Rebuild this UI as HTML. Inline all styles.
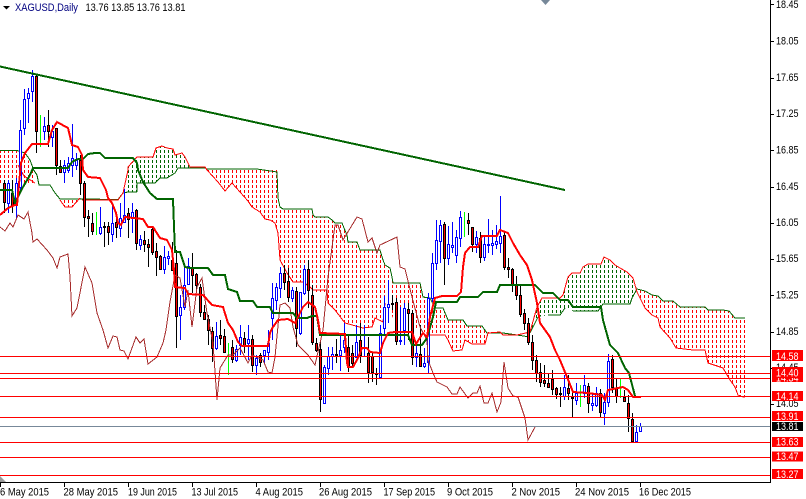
<!DOCTYPE html>
<html><head><meta charset="utf-8"><title>XAGUSD,Daily</title>
<style>html,body{margin:0;padding:0;background:#fff;width:806px;height:499px;overflow:hidden}svg{display:block}
text{font-family:"Liberation Sans",sans-serif;font-size:11px;fill:#000}</style></head><body>
<svg width="806" height="499" viewBox="0 0 806 499" xmlns="http://www.w3.org/2000/svg">
<defs>
<pattern id="r" width="4" height="5" patternUnits="userSpaceOnUse"><rect x="0" y="0" width="1" height="3" fill="#f00"/></pattern>
<pattern id="g" width="4" height="5" patternUnits="userSpaceOnUse"><rect x="0" y="0" width="1" height="3" fill="#006400"/></pattern>
<clipPath id="c"><rect x="0" y="0" width="770" height="482"/></clipPath>
</defs>
<g clip-path="url(#c)">
<!-- cloud -->
<g shape-rendering="crispEdges">
<path fill="url(#r)" d="M0 151H17L25 153L33 170V185H0Z"/>
<path fill="url(#r)" d="M60 200H82L80 198L72 207H65Z"/>
<path fill="url(#g)" d="M128 167L137 157H153L156 148L162 146L167 148L173 149L175 155L182 153L185 157L188 163L190 168L178 168L175 173L167 178H160L155 183H137V192H128Z"/>
<path fill="url(#r)" d="M190 168H205L207 169H277L278 198L280 207L283 209H312L313 215L315 217H328L332 220L335 223H342L344 228L347 235L348 242H357L360 250H380L383 260L385 265L390 268L392 277L393 283H413L420 283L423 297L430 298L435 308H443L448 320H463L467 326H482L487 333H503L517 334L530 337L517 335H503L500 332H488L485 344H472L465 340L462 350H453L448 340L445 335H427L420 327L412 332L405 340L385 303L383 322L375 318L372 327L363 328L345 323L335 310L328 303L327 292H313L310 287L303 282H293L287 273L280 260L278 233L275 223L270 220H265L260 212L252 207L248 201L240 192L232 183L225 191L218 182L207 170Z"/>
<path fill="url(#g)" d="M530 332L537 307L542 298H560L563 295L568 277L572 273H580L583 267L588 264H601L604 257L610 260L615 265L620 268L627 272L633 278L637 289L632 298L630 304H603L598 311H573L565 308L560 315H548L538 317Z"/>
<path fill="url(#r)" d="M637 290L645 291L652 295L658 296L663 301H673L680 307H705L708 310H723L729 311L735 318H745V397H743L738 395L735 387L730 380L723 368L708 363L705 350H676L670 338L660 327L658 318L652 315L645 308Z"/>
</g>
<g fill="none" stroke-width="1" shape-rendering="crispEdges">
<path stroke="#006400" d="M0 150.500H17L25 153L30 160L33 168M33 169L37 175L39 185H50L55 193L60 199H82L118 199.500L123 193L128 192H137M128 167M530 333L538 317M548 315H560L565 308M573 311H598L603 304H630L632 298L637 289L645 291L652 295L658 296L663 301H673L680 307H705L708 310H723L729 311L735 318H745M137 192V183H155L160 178H167L175 173L178 168H190M190 168H205M207 169H257L277 172L278 198L280 207L283 209H312L313 215L315 217H328L332 220L335 223H342L344 228L347 235L348 242H357L360 250H380L383 260L385 265L390 268L392 277L393 283H413L420 283L423 297L430 298L435 308H443L448 320H463L467 326H482L487 333H503L517 335L530 337"/>
<path stroke="#f00" d="M18 165L24 176L35 183M60 200L65 207H72L80 198M82 200H112L118 200L123 193L128 170L128 167L137 157H153L156 148L162 146L167 148L173 149L175 155L182 153L185 157L188 163L190 167H205L207 170L218 182L225 191L232 183L240 192L248 201L252 207L260 212L265 219L270 220L275 223L278 233L280 260L287 273L293 282H303L310 287L313 290H327L328 303L335 310L345 323L363 328L372 327L375 318L383 322L385 303M427 335H445L448 340L453 351L462 350L465 340L472 344H485L488 333L500 332L503 335H517L530 332L537 307L542 298H560L563 295L568 277L572 273H580L583 267L588 264H601L604 257L610 260L615 265L620 268L627 272L633 278L637 292L645 308L652 315L658 318L660 327L670 338L676 348L693 350H705L708 363L723 368L730 380L735 387L738 395L743 397H745"/>
</g>
<!-- candles -->
<g fill="none" stroke="#000" shape-rendering="crispEdges">
<path d="M4.500 180V213M12.500 180V213M36.500 75V153M48.500 110V147M56.500 128V175M60.500 160V173M80.500 155V195M84.500 181V227M88.500 210V237M92.500 213V235M104.500 222V247M108.500 222V245M116.500 212V238M128.500 208V238M136.500 209V250M144.500 231V252M148.500 239V267M152.500 227V255M156.500 243V276M160.500 255V270M172.500 242V270M176.500 250V348M192.500 253V293M196.500 273V292M200.500 284V317M204.500 305V320M208.500 315V345M212.500 327V362M220.500 320V345M224.500 329V352M232.500 340V363M244.500 332V353M252.500 335V372M260.500 353V367M284.500 265V290M288.500 268V302M296.500 287V347M308.500 260V308M312.500 285V345M316.500 338V352M320.500 342V412M336.500 339V363M348.500 335V372M352.500 345V368M360.500 323V363M368.500 337V383M372.500 352V382M376.500 368V385M392.500 295V310M396.500 298V345M408.500 303V340M412.500 310V365M420.500 325V367M444.500 222V285M468.500 213V235M472.500 227V252M480.500 232V263M504.500 232V270M508.500 258V278M512.500 268V292M516.500 276V300M520.500 285V317M524.500 309V330M528.500 318V345M532.500 335V370M536.500 355V382M540.500 363V387M544.500 365V387M548.500 373V388M552.500 370V395M556.500 387V399M560.500 387V407M568.500 375V400M572.500 393V418M588.500 383V413M600.500 389V417M612.500 355V393M616.500 379V403M624.500 390V402M628.500 395V432M632.500 413V442"/>
<path stroke="#00f" d="M8.500 180V213M16.500 178V218M20.500 120V190M24.500 89V135M28.500 88V123M32.500 70V102M44.500 117V140M52.500 125V147M64.500 160V183M68.500 157V173M72.500 124V177M76.500 153V170M100.500 207V235M112.500 203V242M120.500 203V237M124.500 189V220M132.500 203V233M140.500 235V250M164.500 246V274M168.500 251V265M180.500 295V340M184.500 265V310M188.500 258V285M216.500 322V350M236.500 345V362M240.500 325V355M248.500 325V360M256.500 355V375M264.500 350V363M268.500 330V360M272.500 283V340M276.500 283V310M280.500 267V298M292.500 287V302M300.500 292V335M304.500 265V295M324.500 365V403M328.500 347V375M332.500 347V370M340.500 333V371M344.500 323V353M356.500 325V357M364.500 325V357M380.500 325V378M384.500 296V335M388.500 280V323M400.500 307V345M404.500 303V345M416.500 343V367M424.500 348V368M428.500 293V374M432.500 253V302M436.500 220V270M440.500 220V263M448.500 226V265M452.500 222V253M456.500 230V263M460.500 211V247M476.500 231V253M484.500 235V261M488.500 219V253M492.500 230V255M496.500 225V249M500.500 196V253M564.500 375V400M576.500 383V405M584.500 375V398M592.500 393V411M596.500 387V407M604.500 393V425M608.500 354V407M636.500 425V442M640.500 423V432"/>
<path stroke="#0f0" d="M40.500 115V147M96.500 212V235M228.500 343V375M464.500 212V237M580.500 385V407M620.500 379V398"/>
<path fill="#f00" d="M3.500 183.500h2v19h-2zM11.500 193.500h2v12h-2zM35.500 76.500h2v55h-2zM47.500 125.500h2v6h-2zM55.500 128.500h2v37h-2zM59.500 166.500h2v6h-2zM79.500 160.500h2v23h-2zM83.500 183.500h2v34h-2zM87.500 216.500h2v2h-2zM91.500 223.500h2v8h-2zM103.500 226.500h2v1h-2zM107.500 226.500h2v6h-2zM115.500 222.500h2v5h-2zM127.500 213.500h2v6h-2zM135.500 210.500h2v33h-2zM143.500 240.500h2v4h-2zM147.500 244.500h2v3h-2zM151.500 229.500h2v23h-2zM155.500 251.500h2v6h-2zM159.500 256.500h2v13h-2zM171.500 260.500h2v10h-2zM175.500 263.500h2v53h-2zM191.500 268.500h2v7h-2zM195.500 274.500h2v11h-2zM199.500 287.500h2v25h-2zM203.500 312.500h2v7h-2zM207.500 319.500h2v11h-2zM211.500 331.500h2v17h-2zM219.500 335.500h2v3h-2zM223.500 336.500h2v16h-2zM231.500 347.500h2v12h-2zM243.500 338.500h2v7h-2zM251.500 339.500h2v26h-2zM259.500 355.500h2v7h-2zM283.500 273.500h2v9h-2zM287.500 281.500h2v16h-2zM295.500 291.500h2v37h-2zM307.500 269.500h2v21h-2zM311.500 295.500h2v47h-2zM315.500 343.500h2v7h-2zM319.500 349.500h2v50h-2zM335.500 354.500h2v1h-2zM347.500 347.500h2v20h-2zM351.500 353.500h2v10h-2zM359.500 340.500h2v15h-2zM367.500 353.500h2v19h-2zM371.500 356.500h2v16h-2zM375.500 373.500h2v1h-2zM391.500 303.500h2v1h-2zM395.500 302.500h2v39h-2zM407.500 309.500h2v4h-2zM411.500 313.500h2v44h-2zM419.500 354.500h2v12h-2zM443.500 224.500h2v34h-2zM467.500 220.500h2v3h-2zM471.500 227.500h2v17h-2zM479.500 238.500h2v19h-2zM503.500 235.500h2v32h-2zM507.500 267.500h2v2h-2zM511.500 269.500h2v16h-2zM515.500 284.500h2v11h-2zM519.500 295.500h2v19h-2zM523.500 313.500h2v10h-2zM527.500 323.500h2v19h-2zM531.500 342.500h2v18h-2zM535.500 360.500h2v13h-2zM539.500 372.500h2v10h-2zM543.500 380.500h2v3h-2zM547.500 383.500h2v4h-2zM551.500 379.500h2v10h-2zM555.500 388.500h2v6h-2zM559.500 393.500h2v1h-2zM567.500 388.500h2v5h-2zM571.500 397.500h2v1h-2zM587.500 386.500h2v17h-2zM599.500 393.500h2v19h-2zM611.500 359.500h2v28h-2zM615.500 388.500h2v8h-2zM623.500 397.500h2v4h-2zM627.500 403.500h2v15h-2zM631.500 419.500h2v22h-2z"/>
<path fill="#fff" stroke="#00f" d="M7.500 183.500h2v20h-2zM15.500 183.500h2v22h-2zM19.500 130.500h2v57h-2zM23.500 99.500h2v29h-2zM27.500 93.500h2v5h-2zM31.500 76.500h2v15h-2zM43.500 126.500h2v5h-2zM51.500 131.500h2v6h-2zM63.500 165.500h2v7h-2zM67.500 163.500h2v7h-2zM71.500 158.500h2v7h-2zM75.500 160.500h2v5h-2zM99.500 227.500h2v6h-2zM111.500 223.500h2v11h-2zM119.500 218.500h2v10h-2zM123.500 215.500h2v7h-2zM131.500 212.500h2v6h-2zM139.500 239.500h2v6h-2zM163.500 257.500h2v12h-2zM167.500 256.500h2v2h-2zM179.500 307.500h2v8h-2zM183.500 285.500h2v22h-2zM187.500 266.500h2v18h-2zM215.500 336.500h2v12h-2zM235.500 349.500h2v11h-2zM239.500 337.500h2v8h-2zM247.500 339.500h2v4h-2zM255.500 358.500h2v7h-2zM263.500 350.500h2v5h-2zM267.500 343.500h2v9h-2zM271.500 298.500h2v20h-2zM275.500 287.500h2v13h-2zM279.500 273.500h2v15h-2zM291.500 290.500h2v8h-2zM299.500 292.500h2v41h-2zM303.500 269.500h2v24h-2zM323.500 367.500h2v36h-2zM327.500 356.500h2v12h-2zM331.500 354.500h2v2h-2zM339.500 350.500h2v5h-2zM343.500 340.500h2v7h-2zM355.500 342.500h2v15h-2zM379.500 333.500h2v44h-2zM383.500 307.500h2v21h-2zM387.500 304.500h2v3h-2zM399.500 340.500h2v1h-2zM403.500 308.500h2v22h-2zM415.500 353.500h2v4h-2zM423.500 363.500h2v3h-2zM427.500 298.500h2v64h-2zM431.500 263.500h2v35h-2zM435.500 240.500h2v23h-2zM439.500 225.500h2v16h-2zM447.500 244.500h2v14h-2zM451.500 245.500h2v2h-2zM455.500 237.500h2v18h-2zM459.500 217.500h2v21h-2zM475.500 237.500h2v7h-2zM483.500 244.500h2v13h-2zM487.500 244.500h2v1h-2zM491.500 243.500h2v2h-2zM495.500 241.500h2v3h-2zM499.500 236.500h2v7h-2zM563.500 387.500h2v9h-2zM575.500 393.500h2v7h-2zM583.500 385.500h2v8h-2zM591.500 403.500h2v2h-2zM595.500 393.500h2v12h-2zM603.500 402.500h2v11h-2zM607.500 361.500h2v41h-2zM635.500 432.500h2v9h-2zM639.500 426.500h2v5h-2z"/>
</g>
<!-- chikou -->
<path fill="none" stroke="#a52a2a" stroke-width="1" shape-rendering="crispEdges" d="M0 227L5 231L10 223L13 227L18 215L24 219L28 212L32 233L33 242L37 239L47 250L53 258L57 268L60 257L68 254L70 277L72 316L77 308L85 267L92 283L97 313L103 330L108 348L113 336L117 337L120 350L124 351L128 359L136 337L140 343L144 339L148 364L157 357L163 343L166 330L170 302L175 275L180 278L185 307L188 290L192 327L197 287L202 278L207 313L213 343L217 400L220 368L228 355L233 355L240 348L248 363L252 355L263 360L268 372L272 373L275 357L280 305L285 303L290 308L293 327L298 345L308 355L315 365L323 330L328 277L335 225L338 225L343 240L357 217L362 219L368 242L372 238L377 253L380 245L397 237L400 267L405 269L412 297L420 327L427 340L428 360L433 373L437 382L447 387L452 394L457 394L460 387L468 398L473 393L477 393L480 386L484 403L488 403L492 393L497 412L501 402L504 362L508 388L513 396L518 397L525 418L528 440L535 427"/>
<!-- kijun -->
<path fill="none" stroke="#006400" stroke-width="2" shape-rendering="crispEdges" d="M0 190H12L15 203L23 187L30 175L33 168H68L72 162L78 159H83L88 154L95 153H100L105 158H133L137 163L138 170L143 182L150 193L157 199H173L173.500 213L175 252H180L185 267L190 268H208L213 275H225L228 289L237 292L240 301H253L257 307H270L273 313H293L297 318H307L312 316H317L320 335H408L412 345H422L427 338L433 317L436 302H457L460 297H478L483 292H497L500 285H532L535 285L543 293H553L560 300H568L573 307H601L603 320L608 338L610 345L618 353L625 368L629 373L635 396"/>
<!-- tenkan -->
<path fill="none" stroke="#f00" stroke-width="2" shape-rendering="crispEdges" d="M0 215L8 208L15 205H17L21 163L25 153L32 144H48L52 130L57 122L68 128L72 145L78 147L82 155L83 170L88 177L100 178L106 190L108 198L112 203L116 213L118 223L121 225L125 217L133 218L143 219L148 227H153L160 238L167 240L172 250L174 270L175 287L185 288L188 294L203 295L212 305L223 307L228 323L233 330L238 342L242 346H268L270 333L273 327L278 320L288 319L295 323L303 307L308 302L315 307L318 320L320 333L345 334L347 363L348 367H353L358 358L362 348H367L370 352L380 353L383 343L388 333L395 332H412L416 344L423 333L427 337L430 317L435 298L442 296H457L461 292L463 267L465 253L470 247H478L482 236H497L500 230L508 233L513 243L520 255L527 265L532 280L537 303L540 323L550 337L555 350L560 360L567 377L573 392L588 393L602 395L605 400L608 390L623 387L628 390L633 397H641"/>
<!-- trendline -->
<path fill="none" stroke="#006400" stroke-width="2" shape-rendering="crispEdges" d="M0 66.500L565 190"/>
<!-- hlines -->
<g stroke="#f00" shape-rendering="crispEdges">
<path d="M0 356.500H770M0 373.500H770M0 378.500H770M0 396.500H770M0 417.500H770M0 442.500H770M0 457.500H770M0 475.500H770"/>
</g>
<path stroke="#778899" d="M0 426.500H770" shape-rendering="crispEdges"/>
<path fill="#778899" d="M541 0H550L545.500 5Z"/>
<path fill="#999" d="M0 476L6 482H0Z"/>
</g>
<!-- axes -->
<g stroke="#000" shape-rendering="crispEdges" fill="none">
<path d="M770.500 0V483M0 482.500H771"/>
<path d="M771 4.500h3M771 41.500h3M771 78.500h3M771 114.500h3M771 150.500h3M771 187.500h3M771 223.500h3M771 259.500h3M771 295.500h3M771 332.500h3M771 368.500h3M771 404.500h3"/>
<path d="M0.500 483v4M64.500 483v4M128.500 483v4M192.500 483v4M256.500 483v4M320.500 483v4M384.500 483v4M448.500 483v4M512.500 483v4M576.500 483v4M640.500 483v4"/>
</g>
<path fill="#000" d="M3 6H10L6.500 9.500Z"/>
<text x="15" y="11" textLength="63" lengthAdjust="spacingAndGlyphs" style="fill:#000080">XAGUSD,Daily</text>
<text x="85.500" y="11" textLength="100" lengthAdjust="spacingAndGlyphs">13.76 13.85 13.76 13.81</text>
<g>
<text x="776" y="8" textLength="22.500" lengthAdjust="spacingAndGlyphs">18.45</text>
<text x="776" y="44.500" textLength="22.500" lengthAdjust="spacingAndGlyphs">18.05</text>
<text x="776" y="81" textLength="22.500" lengthAdjust="spacingAndGlyphs">17.65</text>
<text x="776" y="117" textLength="22.500" lengthAdjust="spacingAndGlyphs">17.25</text>
<text x="776" y="153.500" textLength="22.500" lengthAdjust="spacingAndGlyphs">16.85</text>
<text x="776" y="190" textLength="22.500" lengthAdjust="spacingAndGlyphs">16.45</text>
<text x="776" y="226" textLength="22.500" lengthAdjust="spacingAndGlyphs">16.05</text>
<text x="776" y="262" textLength="22.500" lengthAdjust="spacingAndGlyphs">15.65</text>
<text x="776" y="298.500" textLength="22.500" lengthAdjust="spacingAndGlyphs">15.25</text>
<text x="776" y="335" textLength="22.500" lengthAdjust="spacingAndGlyphs">14.85</text>
<text x="776" y="371" textLength="22.500" lengthAdjust="spacingAndGlyphs">14.45</text>
<text x="776" y="407" textLength="22.500" lengthAdjust="spacingAndGlyphs">14.05</text>
</g>
<g shape-rendering="crispEdges">
<rect x="772" y="350" width="31" height="11" fill="#f00"/>
<rect x="772" y="372" width="31" height="10" fill="#f00"/>
</g>
<text x="776" y="381.500" textLength="22.500" lengthAdjust="spacingAndGlyphs" style="fill:#fff">14.34</text>
<g shape-rendering="crispEdges">
<rect x="772" y="367" width="31" height="11" fill="#f00"/>
<rect x="772" y="391" width="31" height="10" fill="#f00"/>
<rect x="772" y="411" width="31" height="10" fill="#f00"/>
<rect x="772" y="422" width="31" height="9" fill="#000"/>
<rect x="772" y="437" width="31" height="10" fill="#f00"/>
<rect x="772" y="451.500" width="31" height="10" fill="#f00"/>
<rect x="772" y="469" width="31" height="10" fill="#f00"/>
</g>
<g>
<text x="776" y="360" textLength="22.500" lengthAdjust="spacingAndGlyphs" style="fill:#fff">14.58</text>
<text x="776" y="376.500" textLength="22.500" lengthAdjust="spacingAndGlyphs" style="fill:#fff">14.40</text>
<text x="776" y="400" textLength="22.500" lengthAdjust="spacingAndGlyphs" style="fill:#fff">14.14</text>
<text x="776" y="420" textLength="22.500" lengthAdjust="spacingAndGlyphs" style="fill:#fff">13.91</text>
<text x="776" y="430" textLength="22.500" lengthAdjust="spacingAndGlyphs" style="fill:#fff">13.81</text>
<text x="776" y="445.500" textLength="22.500" lengthAdjust="spacingAndGlyphs" style="fill:#fff">13.63</text>
<text x="776" y="460" textLength="22.500" lengthAdjust="spacingAndGlyphs" style="fill:#fff">13.47</text>
<text x="776" y="478" textLength="22.500" lengthAdjust="spacingAndGlyphs" style="fill:#fff">13.27</text>
</g>
<g>
<text x="0" y="495.500" textLength="49" lengthAdjust="spacingAndGlyphs">6 May 2015</text>
<text x="63.500" y="495.500" textLength="54.500" lengthAdjust="spacingAndGlyphs">28 May 2015</text>
<text x="128" y="495.500" textLength="49" lengthAdjust="spacingAndGlyphs">19 Jun 2015</text>
<text x="191.500" y="495.500" textLength="46.500" lengthAdjust="spacingAndGlyphs">13 Jul 2015</text>
<text x="255.500" y="495.500" textLength="47.500" lengthAdjust="spacingAndGlyphs">4 Aug 2015</text>
<text x="319" y="495.500" textLength="53" lengthAdjust="spacingAndGlyphs">26 Aug 2015</text>
<text x="383.500" y="495.500" textLength="51.500" lengthAdjust="spacingAndGlyphs">17 Sep 2015</text>
<text x="447" y="495.500" textLength="46" lengthAdjust="spacingAndGlyphs">9 Oct 2015</text>
<text x="511.500" y="495.500" textLength="48.500" lengthAdjust="spacingAndGlyphs">2 Nov 2015</text>
<text x="575" y="495.500" textLength="54" lengthAdjust="spacingAndGlyphs">24 Nov 2015</text>
<text x="639" y="495.500" textLength="52" lengthAdjust="spacingAndGlyphs">16 Dec 2015</text>
</g>
</svg>
</body></html>
